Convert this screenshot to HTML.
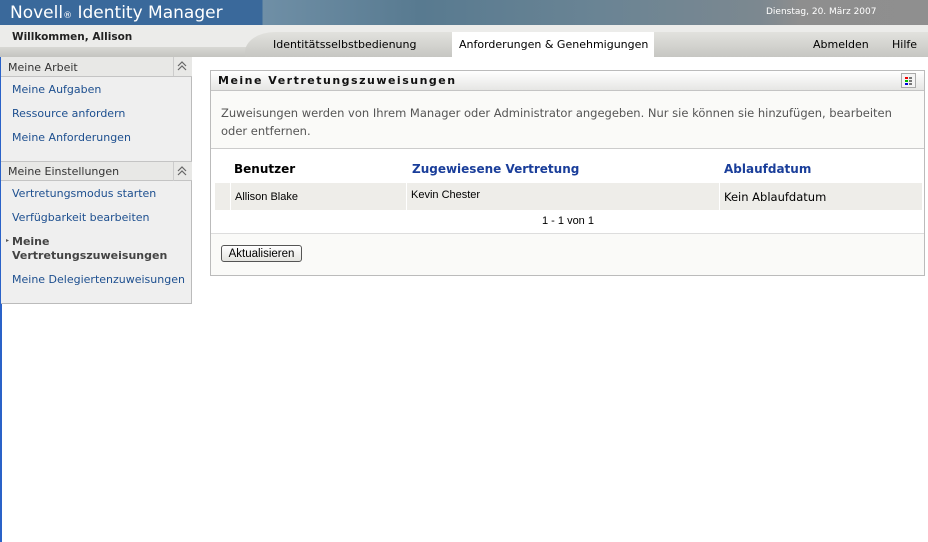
<!DOCTYPE html>
<html><head><meta charset="utf-8"><style>
*{margin:0;padding:0;box-sizing:border-box}
body{width:928px;height:542px;background:#fff;font-family:"DejaVu Sans","Liberation Sans",sans-serif;font-size:11px;position:relative;overflow:hidden;color:#000}
.a{position:absolute}
.lnk{color:#1d4f8f}
</style></head><body>
<div class="a" style="left:0;top:0;width:928px;height:25px;background:linear-gradient(90deg,#3a699b 0,#3a699b 262px,#6f8fa6 263px,#587a90 420px,#6a8494 600px,#7c8890 760px,#8e8e8e 800px,#8f8f8f 928px)"></div>
<div class="a" style="left:10px;top:3px;color:#fff;font-size:17px;font-family:'DejaVu Sans',sans-serif">Novell<span style="font-size:9px">®</span> Identity Manager</div>
<div class="a" style="left:766px;top:7px;color:#fff;font-size:9px">Dienstag, 20. März 2007</div>
<div class="a" style="left:0;top:25px;width:928px;height:32px;background:#ececea"></div>
<div class="a" style="left:0;top:47px;width:260px;height:10px;background:linear-gradient(#d8d8d4,#c4c4c0)"></div>
<div class="a" style="left:245px;top:32px;width:683px;height:25px;background:linear-gradient(#e2e2de,#c6c6c2);border-top-left-radius:30px 20px"></div>
<div class="a" style="left:452px;top:32px;width:202px;height:25px;background:#fff"></div>
<div class="a" style="left:12px;top:31px;font-weight:bold;font-size:10.5px;color:#222">Willkommen, Allison</div>
<div class="a" style="left:273px;top:38px;font-size:11px">Identitätsselbstbedienung</div>
<div class="a" style="left:459px;top:38px;font-size:11px">Anforderungen &amp; Genehmigungen</div>
<div class="a" style="left:813px;top:38px;font-size:11px">Abmelden</div>
<div class="a" style="left:892px;top:38px;font-size:11px">Hilfe</div>
<div class="a" style="left:0;top:57px;width:2px;height:485px;background:#2a62c8"></div>
<div class="a" style="left:1px;top:57px;width:191px;height:247px;background:#efefef;border-right:1px solid #bbb;border-bottom:1px solid #bbb"></div>
<div class="a" style="left:1px;top:57px;width:191px;height:20px;background:#e8e8e6;border-bottom:1px solid #c4c4c4"></div>
<div class="a" style="left:173px;top:57px;width:1px;height:19px;background:#ccc"></div>
<svg class="a" style="left:177px;top:61px" width="10" height="10"><path d="M1 5 L5 1 L9 5 M1 9 L5 5 L9 9" fill="none" stroke="#666" stroke-width="1.2"/></svg>
<div class="a" style="left:8px;top:61px;color:#333">Meine Arbeit</div>
<div class="a lnk" style="left:12px;top:83px">Meine Aufgaben</div>
<div class="a lnk" style="left:12px;top:107px">Ressource anfordern</div>
<div class="a lnk" style="left:12px;top:131px">Meine Anforderungen</div>
<div class="a" style="left:1px;top:161px;width:191px;height:20px;background:#e8e8e6;border-top:1px solid #c4c4c4;border-bottom:1px solid #c4c4c4"></div>
<div class="a" style="left:173px;top:162px;width:1px;height:19px;background:#ccc"></div>
<svg class="a" style="left:177px;top:166px" width="10" height="10"><path d="M1 5 L5 1 L9 5 M1 9 L5 5 L9 9" fill="none" stroke="#666" stroke-width="1.2"/></svg>
<div class="a" style="left:8px;top:165px;color:#333">Meine Einstellungen</div>
<div class="a lnk" style="left:12px;top:187px">Vertretungsmodus starten</div>
<div class="a lnk" style="left:12px;top:211px">Verfügbarkeit bearbeiten</div>
<div class="a" style="left:6px;top:237px;font-size:6px;color:#555">&#9656;</div>
<div class="a" style="left:12px;top:235px;font-weight:bold;color:#444;line-height:14px">Meine<br>Vertretungszuweisungen</div>
<div class="a lnk" style="left:12px;top:273px">Meine Delegiertenzuweisungen</div>
<div class="a" style="left:210px;top:70px;width:715px;height:206px;background:#fafaf8;border:1px solid #bbb"></div>
<div class="a" style="left:211px;top:71px;width:713px;height:20px;background:linear-gradient(#fff,#e6e6e4);border-bottom:1px solid #c4c4c4"></div>
<div class="a" style="left:218px;top:74px;font-weight:bold;font-size:11px;letter-spacing:1.5px;color:#111">Meine Vertretungszuweisungen</div>
<div class="a" style="left:901px;top:73px;width:15px;height:15px;border:1px solid #aaa;background:#f4f4f4"></div>
<div class="a" style="left:905px;top:77px;width:3px;height:2px;background:#e00;box-shadow:0 3px 0 #0b0,0 6px 0 #00d,4px 0 0 #777,4px 3px 0 #777,4px 6px 0 #777"></div>
<div class="a" style="left:221px;top:104px;color:#555;font-size:11.5px;line-height:18px;width:690px">Zuweisungen werden von Ihrem Manager oder Administrator angegeben. Nur sie können sie hinzufügen, bearbeiten oder entfernen.</div>
<div class="a" style="left:211px;top:148px;width:713px;height:86px;background:#fff;border-top:1px solid #ccc;border-bottom:1px solid #ddd"></div>
<div class="a" style="left:234px;top:162px;font-weight:bold;font-size:12px">Benutzer</div>
<div class="a" style="left:412px;top:162px;font-weight:bold;font-size:12px;color:#1a3e9a">Zugewiesene Vertretung</div>
<div class="a" style="left:724px;top:162px;font-weight:bold;font-size:12px;color:#1a3e9a">Ablaufdatum</div>
<div class="a" style="left:215px;top:183px;width:707px;height:27px;background:#eeede9"></div>
<div class="a" style="left:230px;top:183px;width:1px;height:27px;background:#fff"></div>
<div class="a" style="left:406px;top:183px;width:1px;height:27px;background:#fff"></div>
<div class="a" style="left:719px;top:183px;width:1px;height:27px;background:#fff"></div>
<div class="a" style="left:235px;top:191px;font-family:'Liberation Sans',sans-serif;font-size:11px">Allison Blake</div>
<div class="a" style="left:411px;top:189px;font-family:'Liberation Sans',sans-serif;font-size:11px">Kevin Chester</div>
<div class="a" style="left:724px;top:190px;font-size:11.5px">Kein Ablaufdatum</div>
<div class="a" style="left:542px;top:215px;font-family:'Liberation Sans',sans-serif;font-size:11px">1 - 1 von 1</div>
<div class="a" style="left:221px;top:245px;width:81px;height:17px;border:1px solid #555;border-radius:3px;background:linear-gradient(#fff,#e4e4e0);font-family:'Liberation Sans',sans-serif;font-size:11.5px;text-align:center;line-height:17px">Aktualisieren</div>
</body></html>
